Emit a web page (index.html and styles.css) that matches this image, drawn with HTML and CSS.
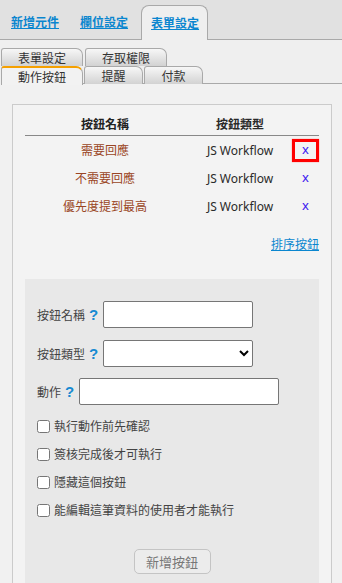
FILE: index.html
```html
<!DOCTYPE html>
<html lang="zh-Hant">
<head>
<meta charset="utf-8">
<link rel="stylesheet" href="styles.css">
</head>
<body>
<header class="topbar">
  <a class="toplink" href="#">新增元件</a>
  <a class="toplink" href="#">欄位設定</a>
  <a class="toptab active" href="#">表單設定</a>
</header>
<nav class="subtabs">
  <div class="tabrow row1">
    <span class="subtab w82">表單設定</span>
    <span class="subtab w82">存取權限</span>
  </div>
  <div class="tabrow row2">
    <span class="subtab w82 current">動作按鈕</span>
    <span class="subtab w59">提醒</span>
    <span class="subtab w59">付款</span>
  </div>
</nav>
<main class="content">
  <section class="panel">
    <div class="btable">
      <div class="brow head">
        <div class="c1">按鈕名稱</div>
        <div class="c2">按鈕類型</div>
        <div class="c3"></div>
      </div>
      <div class="brow">
        <div class="c1 name">需要回應</div>
        <div class="c2">JS Workflow</div>
        <div class="c3"><span class="del marked">x</span></div>
      </div>
      <div class="brow">
        <div class="c1 name">不需要回應</div>
        <div class="c2">JS Workflow</div>
        <div class="c3"><span class="del">x</span></div>
      </div>
      <div class="brow">
        <div class="c1 name">優先度提到最高</div>
        <div class="c2">JS Workflow</div>
        <div class="c3"><span class="del">x</span></div>
      </div>
    </div>
    <div class="sortline"><a class="sortlink" href="#">排序按鈕</a></div>
    <div class="form">
      <div class="frow r1">
        <span class="lbl">按鈕名稱</span><span class="help">?</span>
        <input class="txt w150" type="text">
      </div>
      <div class="frow r2">
        <span class="lbl">按鈕類型</span><span class="help">?</span>
        <select class="sel w150"><option></option></select>
      </div>
      <div class="frow r3">
        <span class="lbl">動作</span><span class="help">?</span>
        <input class="txt w200" type="text">
      </div>
      <label class="chk first"><input type="checkbox"><span>執行動作前先確認</span></label>
      <label class="chk"><input type="checkbox"><span>簽核完成後才可執行</span></label>
      <label class="chk"><input type="checkbox"><span>隱藏這個按鈕</span></label>
      <label class="chk"><input type="checkbox"><span>能編輯這筆資料的使用者才能執行</span></label>
      <div class="btnline"><button class="addbtn" type="button">新增按鈕</button></div>
    </div>
  </section>
</main>
</body>
</html>
```

FILE: styles.css
```css
* { box-sizing: border-box; }
html, body {
  margin: 0;
  padding: 0;
  background: #f0f0f0;
  font-family: "Noto Sans", "Noto Sans CJK TC", sans-serif;
  font-size: 12px;
  color: #333;
  width: 342px;
  height: 583px;
  overflow: hidden;
}
.topbar {
  display: flex;
  align-items: stretch;
  height: 40px;
  padding: 5px 0 0 11px;
  background: #e1e1e1;
  border-bottom: 1px solid #a9a9a9;
}
.toplink, .toptab {
  color: #0a86cf;
  font-weight: bold;
  font-size: 12px;
  text-decoration: underline;
  display: flex;
  align-items: center;
  padding-bottom: 1px;
}
.toplink { margin-right: 21px; }
.toplink + .toptab { margin-left: -8px; }
.toptab {
  padding: 0 8px 1px 9px;
  background: #efefef;
  border: 1px solid #a9a9a9;
  border-bottom: none;
  border-radius: 8px 8px 0 0;
  margin-bottom: -1px;
  height: 35px;
}
.subtabs {
  padding-top: 8px;
  padding-left: 1px;
  background: #efefef;
}
.tabrow {
  display: flex;
  gap: 2px;
  height: 18px;
}
.row2 {
  border-bottom: 1px solid #a9a9a9;
  gap: 1px;
}
.subtab {
  display: flex;
  align-items: center;
  justify-content: center;
  height: 18px;
  font-size: 12px;
  color: #333;
  border: 1px solid #a9a9a9;
  border-bottom: none;
  border-radius: 3px 7px 0 0;
  background: linear-gradient(#f7f7f7, #d2d2d2);
  padding-top: 1px;
}
.row2 .subtab { margin-bottom: -1px; }
.subtab.current {
  background: #f2f2f2;
  border-top: 2px solid #f5a000;
  height: 19px;
}
.w82 { width: 82px; }
.w59 { width: 59px; }
.content {
  background: #f1f1f1;
  padding: 20px 0 0 12px;
  height: 520px;
}
.panel {
  width: 320px;
  height: 600px;
  border: 1px solid #cbcbcb;
  background: #f3f3f3;
  padding: 12px 12px 0 12px;
}
.btable { width: 294px; }
.brow {
  display: flex;
  height: 28px;
  align-items: center;
}
.brow.head {
  height: 19px;
  border-bottom: 1px solid #888;
  font-weight: bold;
  color: #222;
  align-items: flex-start;
  line-height: 16px;
}
.c1 { width: 160px; text-align: center; }
.c2 { width: 110px; text-align: center; color: #2a2a2a; }
.c3 { width: 24px; text-align: center; }
.name { color: #9a4524; }
.del {
  color: #3a16f0;
  font-size: 13px;
  display: inline-block;
  width: 27px;
  height: 23px;
  line-height: 21px;
  text-align: center;
}
.del.marked {
  border: 3px solid #ff0000;
  line-height: 15px;
  box-shadow: 0 0 1px #ff6060;
}
.c3 .del { margin-left: -3px; }
.sortline {
  text-align: right;
  padding-top: 15px;
  height: 59px;
}
.sortlink {
  color: #0a86cf;
  text-decoration: underline;
  font-size: 12px;
}
.form {
  background: #e8e8e8;
  width: 294px;
  height: 320px;
  padding: 22px 12px 0 12px;
}
.frow {
  display: flex;
  align-items: center;
  height: 27px;
  margin-bottom: 12px;
  color: #444;
}
.frow.r2 { margin-bottom: 11px; }
.frow.r3 { margin-bottom: 0; }
.help {
  color: #168ad2;
  font-weight: bold;
  font-size: 15px;
  margin-left: 4px;
  margin-right: 5px;
  font-family: "Liberation Sans", sans-serif;
}
.txt, .sel {
  height: 27px;
  border: 1px solid #767676;
  border-radius: 2px;
  background: #fff;
  margin: 0;
  font-size: 12px;
}
.w150 { width: 150px; }
.w200 { width: 200px; }
.chk {
  display: flex;
  align-items: center;
  height: 28px;
  color: #444;
}
.chk.first { margin-top: 7px; }
.chk input {
  width: 13px;
  height: 13px;
  margin: 0 4px 0 0;
}
.btnline {
  display: flex;
  justify-content: center;
  padding-top: 25px;
}
.addbtn {
  width: 77px;
  height: 25px;
  border: 1px solid #c4c4c4;
  border-radius: 5px;
  background: #ececec;
  color: #777;
  font-family: "Noto Sans", "Noto Sans CJK TC", sans-serif;
  font-size: 13px;
  padding: 0;
}
```
